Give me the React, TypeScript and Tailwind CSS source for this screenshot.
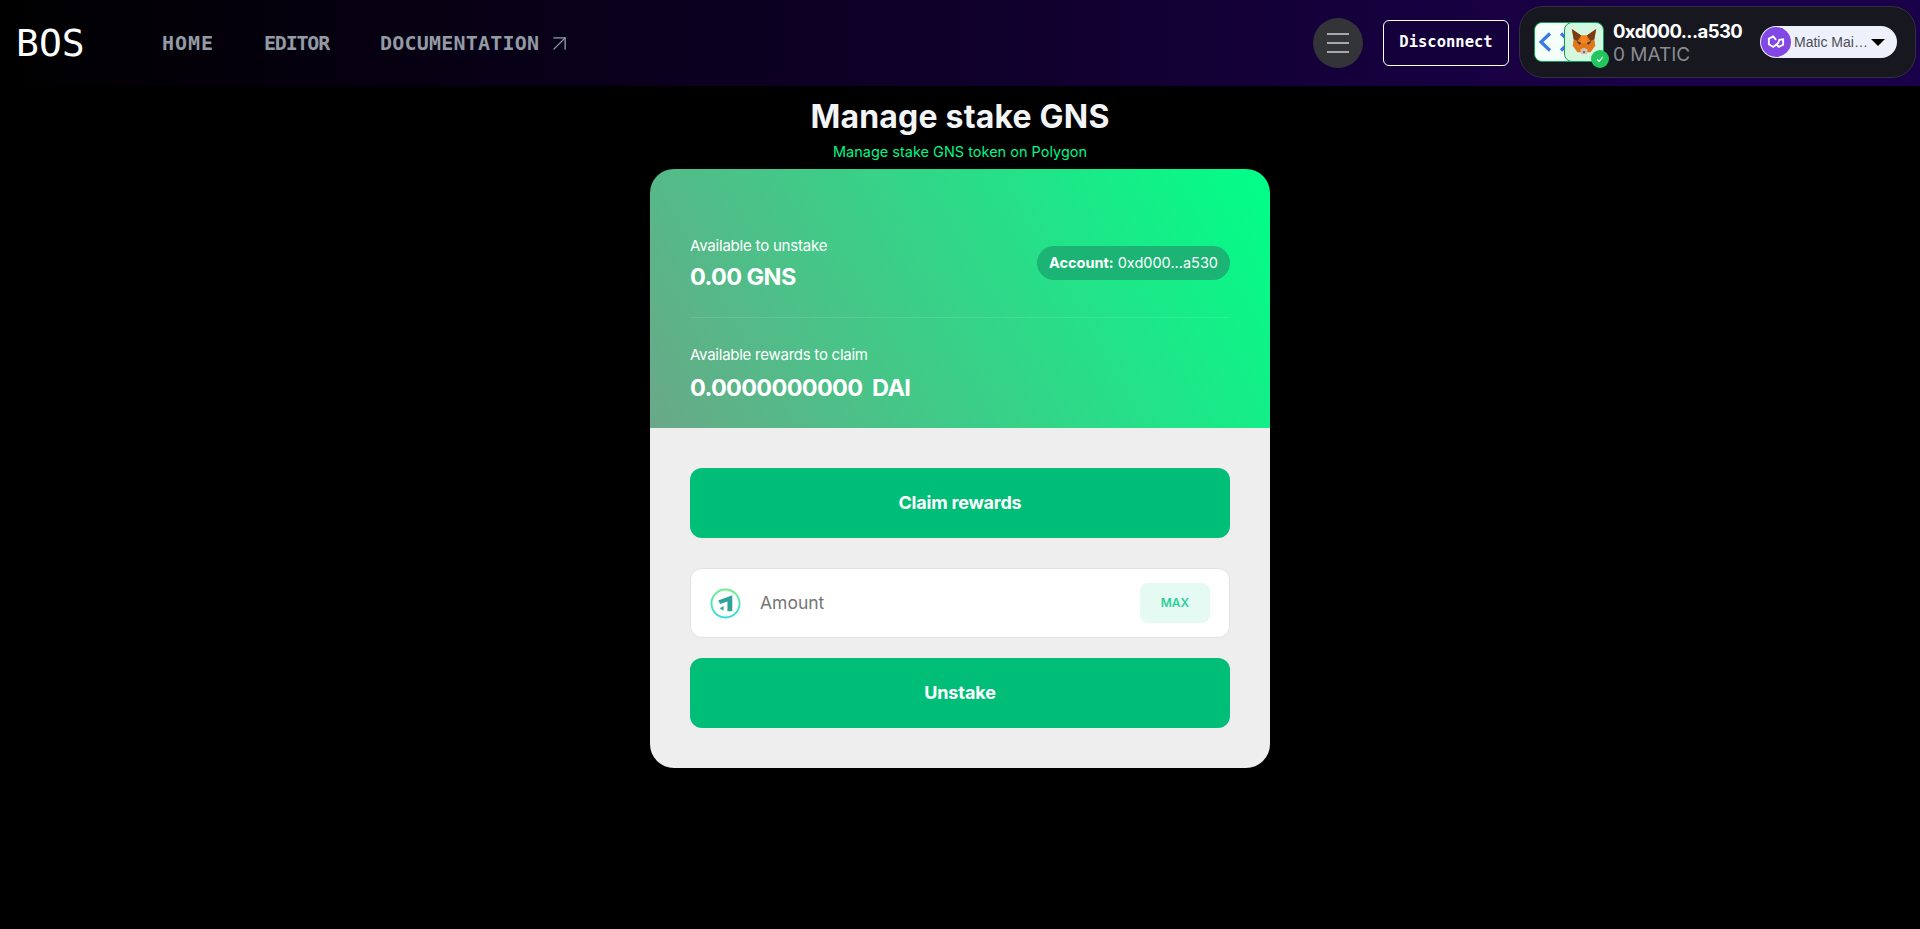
import React from 'react';
import { ArrowUpRight } from 'lucide-react';

function FoxIcon() {
  return (
    <svg viewBox="0 0 32 32" className="w-[30px] h-[30px]">
      <polygon points="3,2 13,9 19,9 29,2 27,13 28,20 23,27 9,27 4,20 5,13" fill="#e2761b" />
      <polygon points="3,2 13,9 9,15 5,13" fill="#763d16" />
      <polygon points="29,2 19,9 23,15 27,13" fill="#763d16" />
      <polygon points="13,9 19,9 20,17 12,17" fill="#f6851b" />
      <polygon points="8,15 13,17 11,19" fill="#233447" />
      <polygon points="24,15 19,17 21,19" fill="#233447" />
      <polygon points="12,24 16,22 20,24 19,29 13,29" fill="#d7c1b3" />
      <polygon points="14.5,26 17.5,26 16,28" fill="#233447" />
    </svg>
  );
}

function WalletPill() {
  return (
    <div className="flex items-center h-[72px] w-[397px] pl-[14px] rounded-[24px] bg-[#17181f] border border-[#30323c]">
      <div className="relative w-[70px] h-[40px] shrink-0">
        <div className="absolute left-0 top-0 w-[43px] h-[40px] rounded-[8px] bg-[#f4fff9] border border-[#0f9d58] overflow-hidden flex items-center gap-[7px] pl-[3px] text-[#3b78e7]">
          <svg viewBox="0 0 14 20" className="w-[14px] h-[20px] shrink-0" fill="none" stroke="currentColor" strokeWidth="3.2">
            <path d="M12 1.5 L3 10 L12 18.5" />
          </svg>
          <svg viewBox="0 0 14 20" className="w-[14px] h-[20px] shrink-0" fill="none" stroke="currentColor" strokeWidth="3.2">
            <path d="M2 1.5 L11 10 L2 18.5" />
          </svg>
        </div>
        <div className="absolute left-[30px] top-0 w-[40px] h-[40px] rounded-[8px] bg-[#d4f7e0] border border-[#0f9d58] flex items-center justify-center">
          <FoxIcon />
        </div>
        <div className="absolute left-[57px] top-[28px] w-[18px] h-[18px] rounded-full bg-[#22c55e] flex items-center justify-center">
          <svg viewBox="0 0 12 12" className="w-[10px] h-[10px]" fill="none" stroke="white" strokeWidth="1.4">
            <path d="M2.5 6.5 L5 9 L9.5 3.5" />
          </svg>
        </div>
      </div>
      <div className="ml-[9px] mt-[1px] w-[147px] font-[Inter,sans-serif] leading-[24px]">
        <div className="text-[18.5px] font-bold text-white tracking-[-0.6px]">0xd000...a530</div>
        <div className="text-[19px] text-[#8a8b91]">0 MATIC</div>
      </div>
      <div className="flex items-center h-[32px] w-[137px] rounded-full bg-[#eef0fb] pl-[1px]">
        <div className="w-[30px] h-[30px] rounded-full bg-[#8247e5] flex items-center justify-center shrink-0">
          <svg viewBox="0 0 20 20" className="w-[22px] h-[22px]" fill="none" stroke="white" strokeWidth="1.7">
            <path d="M10 8 L7.5 5 L3.5 7 V12 L7.5 14.5 L12 11 L13 8 L16.5 7.5 V12.5 L12.5 14.5 L10 12" />
          </svg>
        </div>
        <span className="ml-[3px] w-[77px] whitespace-nowrap font-['Liberation_Sans',sans-serif] text-[14px] text-[#4b4d57]">Matic Mai…</span>
        <div className="w-0 h-0 border-x-[7px] border-x-transparent border-t-[7px] border-t-black" />
      </div>
    </div>
  );
}

function Header() {
  return (
    <header className="h-[86px] flex items-center bg-[linear-gradient(90deg,#000000_0%,#1a0048_85%,#1a0048_100%)]">
      <div className="ml-[16px] w-[146px] font-['DejaVu_Sans_Mono',monospace] text-[38px] leading-none text-white">BOS</div>
      <nav className="flex items-center font-['DejaVu_Sans_Mono',monospace] font-bold text-[20px] text-[#929ba3] tracking-[0.2px]">
        <a className="w-[102px] tracking-[1px]">HOME</a>
        <a className="w-[116px] tracking-[-1.2px]">EDITOR</a>
        <a className="flex items-center gap-[7px]">
          DOCUMENTATION
          <ArrowUpRight size={27} strokeWidth={1.2} />
        </a>
      </nav>
      <div className="ml-auto flex items-center">
        <button className="w-[50px] h-[50px] rounded-full bg-[#333438] flex flex-col items-center justify-center gap-[7px]">
          <span className="block w-[22px] h-[2px] bg-[#a8a8a8]" />
          <span className="block w-[22px] h-[2px] bg-[#a8a8a8]" />
          <span className="block w-[22px] h-[2px] bg-[#a8a8a8]" />
        </button>
        <button className="ml-[20px] w-[126px] h-[46px] rounded-[6px] border border-white bg-[#14003a] text-white font-['DejaVu_Sans_Mono',monospace] font-bold text-[15.5px]">
          Disconnect
        </button>
        <div className="ml-[10px] mr-[4px] mb-[2px]">
          <WalletPill />
        </div>
      </div>
    </header>
  );
}

export default function App() {
  return (
    <div className="min-h-[929px] bg-black font-[Inter,sans-serif]">
      <Header />
      <main className="flex flex-col items-center">
        <h1 className="mt-[11px] text-[32px] leading-[40px] font-bold text-[#f3f4f6] tracking-[0.2px]">Manage stake GNS</h1>
        <p className="mt-[5px] text-[14.5px] leading-[20px] text-[#00f58a]">Manage stake GNS token on Polygon</p>
        <section className="mt-[7px] w-[620px] rounded-[24px] overflow-hidden">
          <div className="h-[259px] px-[40px] pt-[67px] bg-[linear-gradient(60deg,#6aa888_0%,#00ff88_100%)] text-white">
            <div className="flex items-center justify-between pb-[25px] border-b border-white/10">
              <div>
                <div className="text-[15px] leading-[20px] tracking-[-0.2px]">Available to unstake</div>
                <div className="mt-[6px] text-[23.5px] leading-[30px] font-bold tracking-[-0.6px]">0.00 GNS</div>
              </div>
              <div className="h-[34px] mb-[2px] px-[12px] rounded-full bg-[#1bb474] flex items-center text-[14.5px]">
                <b className="font-bold mr-[4px]">Account:</b> 0xd000...a530
              </div>
            </div>
            <div className="mt-[27px] text-[15px] leading-[20px] tracking-[-0.25px]">Available rewards to claim</div>
            <div className="mt-[8px] text-[23.5px] leading-[30px] font-bold whitespace-pre tracking-[-0.7px]">0.0000000000  DAI</div>
          </div>
          <div className="h-[340px] bg-[#eeeeee] px-[40px] pt-[40px]">
            <button className="w-full h-[70px] pb-[2px] rounded-[12px] bg-[#00bd78] text-white text-[18px] font-bold tracking-[-0.2px]">Claim rewards</button>
            <div className="mt-[30px] h-[70px] rounded-[12px] bg-white border border-[#e2e2e2] flex items-center pl-[19px] pr-[19px]">
              <svg viewBox="0 0 32 32" className="w-[31px] h-[31px] shrink-0">
                <defs>
                  <linearGradient id="ring" x1="0" y1="0" x2="0" y2="1">
                    <stop offset="0" stopColor="#6cf08a" />
                    <stop offset="1" stopColor="#30dcdc" />
                  </linearGradient>
                </defs>
                <circle cx="16" cy="16" r="14.5" fill="none" stroke="url(#ring)" strokeWidth="2" />
                <polygon points="8.5,13 23,7.5 23,24 18,24 18,14 10.5,16.5" fill="#2fa39a" />
                <polygon points="10,21 14,18.5 14,23.5" fill="#2fa39a" />
              </svg>
              <span className="ml-[19px] text-[17.5px] text-[#757575] flex-1">Amount</span>
              <button className="w-[70px] h-[40px] rounded-[8px] bg-[#e4faf3] text-[#2fcf97] text-[12px] font-semibold">MAX</button>
            </div>
            <button className="mt-[20px] w-full h-[70px] pb-[1px] rounded-[12px] bg-[#00bd78] text-white text-[18px] font-bold tracking-[-0.1px]">Unstake</button>
          </div>
        </section>
      </main>
    </div>
  );
}
